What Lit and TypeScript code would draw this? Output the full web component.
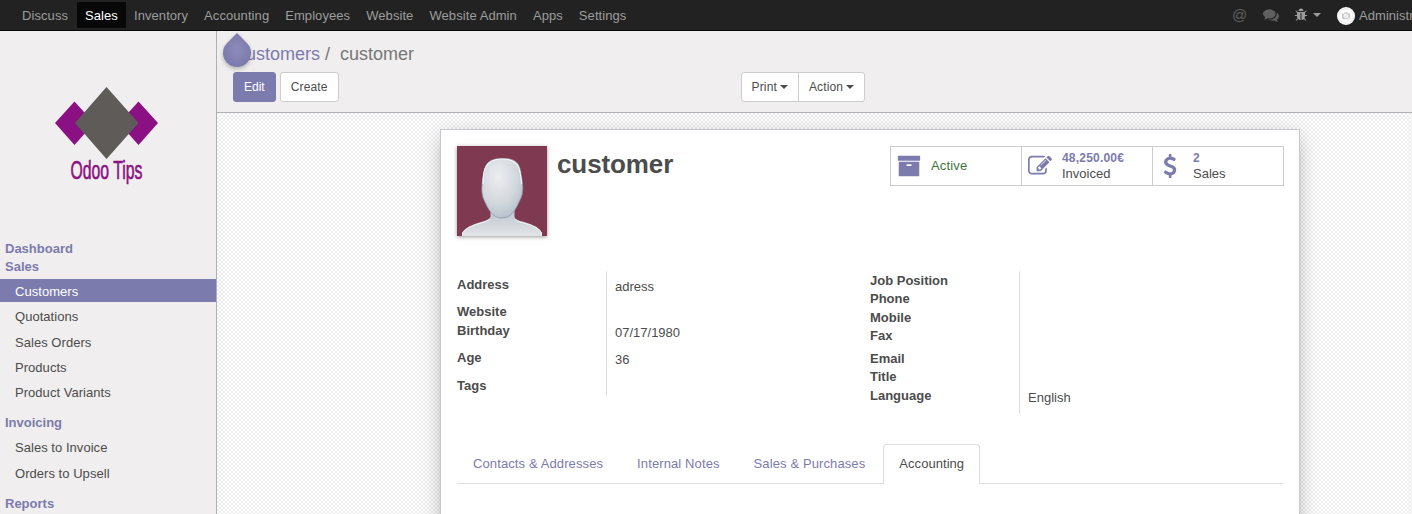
import { LitElement, html, css, svg } from "lit";
import { customElement } from "lit/decorators.js";
import { classMap } from "lit/directives/class-map.js";

const ICONS: Record<string, string> = {
  archive: "M1088 832q0-26-19-45t-45-19h-256q-26 0-45 19t-19 45 19 45 45 19h256q26 0 45-19t19-45zm576-192v960q0 26-19 45t-45 19h-1408q-26 0-45-19t-19-45v-960q0-26 19-45t45-19h1408q26 0 45 19t19 45zm64-448v256q0 26-19 45t-45 19h-1536q-26 0-45-19t-19-45v-256q0-26 19-45t45-19h1536q26 0 45 19t19 45z",
  edit: "M888 1184l116-116-152-152-116 116v56h96v96h56zm440-720q-16-16-33 1l-350 350q-17 17-1 33t33-1l350-350q17-17 1-33zm80 594v190q0 119-84.5 203.5t-203.5 84.5h-832q-119 0-203.5-84.5t-84.5-203.5v-832q0-119 84.5-203.5t203.5-84.5h832q63 0 117 25 15 7 18 23 3 17-9 29l-49 49q-14 14-32 8-23-6-45-6h-832q-66 0-113 47t-47 113v832q0 66 47 113t113 47h832q66 0 113-47t47-113v-126q0-13 9-22l64-64q15-15 35-7t20 29zm-96-738l288 288-672 672h-288v-288zm444 132l-92 92-288-288 92-92q28-28 68-28t68 28l152 152q28 28 28 68t-28 68z",
  usd: "M1362 1185q0 153-99.5 263.5t-258.5 136.5v175q0 14-9 23t-23 9h-135q-13 0-22.5-9.5t-9.5-22.5v-175q-66-9-127.5-31t-101.5-44.5-74-48-46.5-37.5-17.5-18q-17-21-2-41l103-135q7-10 23-12 15-2 24 9l2 2q113 99 243 125 37 8 74 8 81 0 142.5-43t61.5-122q0-28-15-53t-33.5-42-58.5-37.5-66-32-80-32.5q-39-16-61.5-25t-61.5-26.5-62.5-31-56.5-35.5-53.5-42.5-43.5-49-35.5-58-21-66.5-8.5-78q0-138 98-242t255-134v-180q0-13 9.5-22.5t22.5-9.5h135q14 0 23 9t9 23v176q57 6 110.5 23t87 33.5 63.5 37.5 39 29 15 14q17 18 5 38l-81 146q-8 15-23 16-14 3-27-7-3-3-14.5-12t-39-26.5-58.5-32-74.5-26-85.5-11.5q-95 0-155 43t-60 111q0 26 8.5 48t29.5 41.5 39.5 33 56 31 60.5 27 70 27.5q53 20 81 31.5t76 35 75.5 42.5 62 50 53 63.5 31.5 76.5 13 94z",
  comments: "M1408 768q0 139-94 257t-256.5 186.5-353.5 68.5q-86 0-176-16-124 88-278 128-36 9-86 16h-3q-11 0-20.5-8t-11.5-21q-1-3-1-6.5t.5-6.5 2-6l2.5-5 3.5-5.5 4-5 4.5-5 4-4.5q5-6 23-25t26-29.5 22.5-29 25-38.5 20.5-44q-124-72-195-177t-71-224q0-139 94-257t256.5-186.5 353.5-68.5 353.5 68.5 256.5 186.5 94 257zm384 256q0 120-71 224.5t-195 176.5q10 24 20.5 44t25 38.5 22.5 29 26 29.5 23 25q1 1 4 4.5t4.5 5 4 5 3.5 5.5l2.5 5 2 6 .5 6.5-1 6.5q-3 14-13 22t-22 7q-50-7-86-16-154-40-278-128-90 16-176 16-271 0-472-132 58 4 88 4 161 0 309-45t264-129q125-92 192-212t67-254q0-77-23-152 129 71 204 178t75 230z",
  bug: "M1696 960q0 26-19 45t-45 19h-224q0 171-67 290l208 209q19 19 19 45t-19 45q-18 19-45 19t-45-19l-198-197q-5 5-15 13t-42 28.5-65 36.5-82 29-97 13v-896h-128v896q-51 0-101.5-13.5t-87-33-66-39-43.5-32.5l-15-14-183 207q-20 21-48 21-24 0-43-16-19-18-20.5-44.5t15.5-46.5l202-227q-58-114-58-274h-224q-26 0-45-19t-19-45 19-45 45-19h224v-294l-173-173q-19-19-19-45t19-45 45-19 45 19l173 173h844l173-173q19-19 45-19t45 19 19 45-19 45l-173 173v294h224q26 0 45 19t19 45zm-480-576h-640q0-133 93.5-226.5t226.5-93.5 226.5 93.5 93.5 226.5z",
};

const icon = (name: string, cls: string) =>
  html`<svg class=${cls} viewBox="0 0 1792 1792">${svg`<path fill="currentColor" d=${ICONS[name]}></path>`}</svg>`;

const shared = css`
  * { box-sizing: border-box; }
  :host { display: block; font: 13px/20px "Liberation Sans", Arial, sans-serif; color: #4c4c4c; white-space: nowrap; }
  .caret { display: inline-block; flex: none; border: 4px solid transparent; border-top-color: currentColor; border-bottom: 0; vertical-align: middle; }
`;

@customElement("top-nav")
export class TopNav extends LitElement {
  static styles = [shared, css`
    .bar { height: 31px; background: #222; border-bottom: 1px solid #080808; display: flex; padding: 2px 0 2px 14px; overflow: hidden; color: #9d9d9d; }
    .item { height: 26px; line-height: 27px; padding: 0 8px; letter-spacing: .075px; }
    .item:first-child { padding-right: 9px; }
    .active { background: #080808; color: #fff; }
    .tray { margin-left: auto; width: 180px; flex: none; display: flex; align-items: center; }
    .tray > * { flex: none; }
    .at { font-size: 15px; color: #5f5f5f; width: 31px; }
    .comments { width: 16px; height: 16px; color: #5f5f5f; margin-right: 15px; }
    .bug { width: 14px; height: 14px; margin-right: 5px; }
    .avatar { width: 18px; height: 18px; margin: 2px 4px 0 16px; }
    .user { line-height: 22px; padding-top: 2px; letter-spacing: .05px; }
  `];
  render() {
    const items = ["Discuss", "Sales", "Inventory", "Accounting", "Employees", "Website", "Website Admin", "Apps", "Settings"];
    return html`<nav class="bar">
      ${items.map((t) => html`<a class=${classMap({ item: true, active: t === "Sales" })}>${t}</a>`)}
      <div class="tray">
        <span class="at">@</span>${icon("comments", "comments")}${icon("bug", "bug")}<span class="caret"></span>
        <svg class="avatar" viewBox="0 0 18 18"><circle cx="9" cy="9" r="9" fill="#fff"></circle><circle cx="9" cy="9" r="7.3" fill="none" stroke="#e8e8e8"></circle><path d="M5 6.2h2l1-1h2l1 1h2.2v6H5z" fill="#ccc"></path><circle cx="9" cy="9" r="1.8" fill="#ddd" stroke="#fff" stroke-width=".8"></circle><path d="M5 5.4l8.4 7" stroke="#fff" stroke-width=".7"></path></svg>
        <span class="user">Administrator</span>
      </div>
    </nav>`;
  }
}

@customElement("side-menu")
export class SideMenu extends LitElement {
  static styles = [shared, css`
    :host { width: 217px; flex: none; background: #f0eeee; border-right: 1px solid #afafb6; overflow: hidden; }
    .logo { display: block; width: 216px; height: 209px; }
    .head { height: 18px; line-height: 18px; padding-left: 5px; font-weight: bold; color: #7c7bad; }
    .link { height: 23px; line-height: 26px; padding-left: 15px; margin-bottom: 2.3px; letter-spacing: .04px; }
    .on { background: #7c7bad; color: #fff; }
    .group { padding: 3px 0 9px; }
    .word { font-family: "Liberation Sans Narrow", "Liberation Sans", sans-serif; font-size: 25px; fill: #8b1083; stroke: #8b1083; stroke-width: .6px; }
  `];
  links(items: string[]) {
    return html`<div class="group">${items.map((t) => html`<div class=${classMap({ link: true, on: t === "Customers" })}>${t}</div>`)}</div>`;
  }
  render() {
    return html`
      <svg class="logo" viewBox="0 31 216 209">
        <path d="M55 123L74.5 101.500 94 123 74.500 145zM119 123L138.500 101.500 158 123 138.500 145z" fill="#8b1083"></path>
        <path d="M75 123L106.500 87 138.500 123 106.500 159z" fill="#5e5b59"></path>
        <text class="word" x="70.500" y="178.500" textLength="72" lengthAdjust="spacingAndGlyphs">Odoo Tips</text>
      </svg>
      <div class="head">Dashboard</div>
      <div class="head">Sales</div>
      ${this.links(["Customers", "Quotations", "Sales Orders", "Products", "Product Variants"])}
      <div class="head">Invoicing</div>
      ${this.links(["Sales to Invoice", "Orders to Upsell"])}
      <div class="head">Reports</div>`;
  }
}

@customElement("control-panel")
export class ControlPanel extends LitElement {
  static styles = [shared, css`
    .panel { position: relative; height: 82px; background: #f0eeee; border-bottom: 1px solid #afafb6; padding: 12px 16px 0; }
    .crumbs { height: 22px; line-height: 22px; font-size: 18px; color: #777; }
    .crumb { color: #7c7bad; }
    .here { margin-left: 5px; }
    .drop { position: absolute; left: 5px; top: 1px; width: 30px; height: 37px; filter: drop-shadow(0 2px 2px rgba(0,0,0,.25)); }
    .row { display: flex; margin-top: 7px; }
    .btn { height: 30px; line-height: 28px; font-size: 12px; padding: 0 10px; border: 1px solid #ccc; border-radius: 3px; background: #fff; letter-spacing: .14px; }
    .primary { background: #7c7bad; border-color: #7c7bad; color: #fff; margin-right: 4px; letter-spacing: 0; }
    .pair { display: flex; margin-left: 402px; }
    .first { border-radius: 3px 0 0 3px; }
    .last { border-radius: 0 3px 3px 0; margin-left: -1px; }
    .caret { margin: 0 0 2px 3px; }
  `];
  render() {
    return html`<div class="panel">
      <div class="crumbs"><span class="crumb">Customers</span> / <span class="here">customer</span></div>
      <svg class="drop" viewBox="0 0 30 37"><defs><radialGradient id="g"><stop offset="0" stop-color="#8d8bba"></stop><stop offset="1" stop-color="#7c7bad"></stop></radialGradient></defs><path d="M15 1L25.300 11.500A14 14 0 1 1 4.700 11.500z" fill="url(#g)"></path></svg>
      <div class="row">
        <div class="btn primary">Edit</div><div class="btn">Create</div>
        <div class="pair"><div class="btn first">Print<span class="caret"></span></div><div class="btn last">Action<span class="caret"></span></div></div>
      </div>
    </div>`;
  }
}

type Row = { label: string; value?: string; height: number };

@customElement("field-group")
export class FieldGroup extends LitElement {
  static properties = { rows: { attribute: false } };
  declare rows: Row[];
  static styles = [shared, css`
    .row { display: grid; grid-template-columns: 149px 1fr; }
    .label { font-weight: bold; }
    .value { border-left: 1px solid #ddd; padding: 2px 0 0 8px; }
  `];
  render() {
    return html`${this.rows.map((r) => html`<div class="row" style="height:${r.height}px"><div class="label">${r.label}</div><div class="value">${r.value ?? ""}</div></div>`)}`;
  }
}

@customElement("form-sheet")
export class FormSheet extends LitElement {
  static styles = [shared, css`
    .sheet { width: 860px; height: 440px; margin: 16px 0 0 223px; padding: 16px; background: #fff; border: 1px solid #c8c8d3; box-shadow: 0 5px 20px -5px rgba(0,0,0,.4); }
    .top { display: flex; height: 125px; align-items: flex-start; }
    .photo { width: 90px; height: 90px; box-shadow: 0 1px 4px rgba(0,0,0,.4); }
    .name { margin: 0 0 0 10px; font-size: 26px; line-height: 36px; font-weight: bold; letter-spacing: -.1px; }
    .stats { margin-left: auto; display: flex; height: 40px; width: 394px; border: 1px solid #ccc; margin-right: -1px; }
    .stat { flex: 1; display: flex; align-items: center; line-height: 15px; padding-bottom: 1px; }
    .stat + .stat { border-left: 1px solid #ccc; }
    .glyph { width: 24px; height: 24px; margin: 0 10px 0 6px; color: #7c7bad; }
    .usd { margin-left: 5px; margin-right: 11px; }
    .green { color: #3c763d; letter-spacing: .15px; }
    .num { font-size: 12px; font-weight: bold; color: #7c7bad; letter-spacing: .2px; }
    .cols { display: flex; height: 173px; align-items: flex-start; }
    .left { width: 413px; }
    .tabs { display: flex; height: 40px; border-bottom: 1px solid #ddd; color: #7c7bad; }
    .tab { height: 40px; padding: 0 15px; line-height: 38px; border: 1px solid transparent; border-bottom: 0; margin-right: 2px; letter-spacing: .11px; }
    .current { color: #4c4c4c; background: #fff; border-color: #ddd; border-radius: 4px 4px 0 0; letter-spacing: .05px; }
    .lead { height: 4px; width: 150px; border-right: 1px solid #ddd; }
  `];
  render() {
    const left: Row[] = [
      { label: "Address", value: "adress", height: 27 }, { label: "Website", height: 19 },
      { label: "Birthday", value: "07/17/1980", height: 27 }, { label: "Age", value: "36", height: 28 }, { label: "Tags", height: 19 },
    ];
    const right: Row[] = [
      { label: "Job Position", height: 18 }, { label: "Phone", height: 19 }, { label: "Mobile", height: 18 }, { label: "Fax", height: 23 },
      { label: "Email", height: 18 }, { label: "Title", height: 19 }, { label: "Language", value: "English", height: 28 },
    ];
    return html`<section class="sheet">
      <div class="top">
        <svg class="photo" viewBox="0 0 90 90">
          <defs>
            <radialGradient id="face" cx=".4" cy=".3" r=".75"><stop offset="0" stop-color="#eceef0"></stop><stop offset=".6" stop-color="#d3d8de"></stop><stop offset="1" stop-color="#b4bec9"></stop></radialGradient>
            <linearGradient id="body" x2="0" y2="1"><stop offset="0" stop-color="#bcc5ce"></stop><stop offset="1" stop-color="#e2e5e8"></stop></linearGradient>
          </defs>
          <rect width="90" height="90" fill="#7f3950"></rect>
          <path d="M33.500 64V71Q32 74 24 76Q9 80 5 87V90H85V87Q82 80 67 76Q58 74 57.500 71V64z" fill="url(#body)"></path>
          <path d="M5.500 90V87Q9 81 24 77Q31 75 33 73M57.500 73Q59 75 67 77Q82 81 84.500 87V90" fill="none" stroke="#f0f1f2"></path>
          <path d="M45.500 12.500C58 12 63 17 64 28C66 38 67 47 63 54C58 65 54 72 45 72C36 72 32 65 27 54C23.500 47 25 38 26.500 28C28 17 33 12 45.500 12.500z" fill="url(#face)" stroke="#8796a6" stroke-width=".7"></path>
          <path d="M26 38C26 24 28 13 45 13S63.500 22 64.500 38" fill="none" stroke="#f4f5f6" stroke-width="1.200"></path>
        </svg>
        <h1 class="name">customer</h1>
        <div class="stats">
          <div class="stat">${icon("archive", "glyph")}<span class="green">Active</span></div>
          <div class="stat">${icon("edit", "glyph")}<div><div class="num">48,250.00€</div><div>Invoiced</div></div></div>
          <div class="stat">${icon("usd", "glyph usd")}<div><div class="num">2</div><div>Sales</div></div></div>
        </div>
      </div>
      <div class="cols">
        <div class="left"><div class="lead"></div><field-group .rows=${left}></field-group></div>
        <div class="left"><field-group .rows=${right}></field-group></div>
      </div>
      <div class="tabs">
        ${["Contacts & Addresses", "Internal Notes", "Sales & Purchases", "Accounting"].map((t) => html`<div class=${classMap({ tab: true, current: t === "Accounting" })}>${t}</div>`)}
      </div>
    </section>`;
  }
}

@customElement("app-root")
export class AppRoot extends LitElement {
  static styles = [shared, css`
    :host { height: 514px; overflow: hidden; }
    .body { display: flex; height: 483px; }
    .main { flex: 1; min-width: 0; overflow: hidden; background: repeating-conic-gradient(#ececec 0 25%, #fff 0 50%) 0 0 / 4px 4px; }
  `];
  render() {
    return html`<top-nav></top-nav>
      <div class="body"><side-menu></side-menu><main class="main"><control-panel></control-panel><form-sheet></form-sheet></main></div>`;
  }
}
